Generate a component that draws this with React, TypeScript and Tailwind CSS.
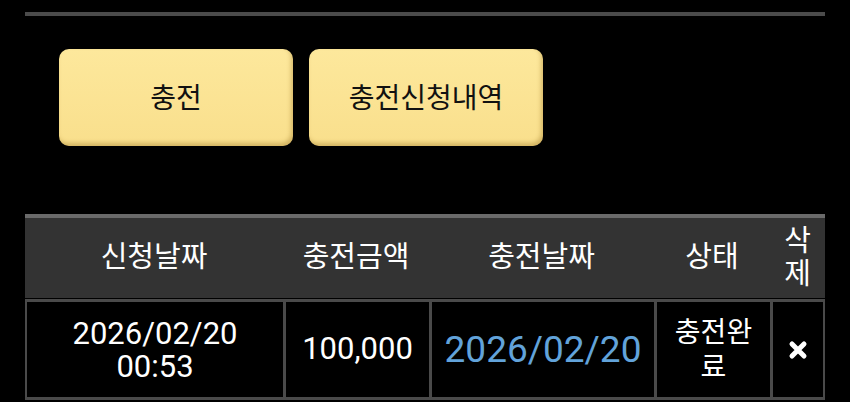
import type { ReactNode } from 'react';

type ChargeRequest = {
	requestedAt: string;
	requestedTime: string;
	amount: string;
	chargedAt: string;
	status: string;
};

const requests: ChargeRequest[] = [
	{
		requestedAt: '2026/02/20',
		requestedTime: '00:53',
		amount: '100,000',
		chargedAt: '2026/02/20',
		status: '충전완료',
	},
];

const cols = 'grid grid-cols-[258px_146px_225px_116px_55px]';

function ChargeButton({ children }: { children: ReactNode }) {
	return (
		<button className="w-[234px] h-[97px] rounded-[10px] bg-gradient-to-b from-[#fde89c] to-[#f9df8c] pt-[2px] text-[28px] text-[#111] shadow-[inset_-2px_-3px_4px_rgba(140,100,20,0.35)]">
			{children}
		</button>
	);
}

function DeleteIcon() {
	return (
		<svg width="20" height="20" viewBox="0 0 20 20">
			<path
				d="M4 4 L16 16 M16 4 L4 16"
				stroke="#fff"
				strokeWidth="5"
				strokeLinecap="round"
			/>
		</svg>
	);
}

function HeaderCell({ children, narrow }: { children: ReactNode; narrow?: boolean }) {
	return (
		<div
			className={
				narrow
					? 'flex items-center justify-center text-center px-[6px] leading-[33px]'
					: 'flex items-center justify-center text-center'
			}
		>
			{children}
		</div>
	);
}

function RequestRow({ item }: { item: ChargeRequest }) {
	return (
		<div className={`${cols} h-[101px] border-y-[3px] border-[#4a4a4a] text-white`}>
			<div className="flex flex-col items-center justify-center border-l-2 border-[#4a4a4a] text-[31px] leading-[33px]">
				<span>{item.requestedAt}</span>
				<span>{item.requestedTime}</span>
			</div>
			<div className="flex items-center justify-center border-l-[3px] border-[#4a4a4a] text-[31px]">
				{item.amount}
			</div>
			<div className="flex items-center justify-center border-l-[3px] border-[#4a4a4a] text-[37px] text-[#62a3da]">
				{item.chargedAt}
			</div>
			<div className="flex items-center justify-center border-l-[3px] border-[#4a4a4a] px-[6px] text-center text-[28px] leading-[35px]">
				{item.status}
			</div>
			<div className="flex items-center justify-center border-l-[3px] border-r-2 border-[#4a4a4a]">
				<DeleteIcon />
			</div>
		</div>
	);
}

export default function App() {
	return (
		<div className="w-[850px] h-[402px] overflow-hidden bg-black font-['Roboto','Noto_Sans_CJK_KR',sans-serif]">
			<div className="pt-[12px] px-[25px]">
				<div className="h-[4px] bg-[#4b4b4b]" />

				<div className="mt-[33px] ml-[34px] flex gap-[16px]">
					<ChargeButton>충전</ChargeButton>
					<ChargeButton>충전신청내역</ChargeButton>
				</div>

				<div className="mt-[68px]">
					<div className={`${cols} h-[84px] border-t-4 border-[#6a6a6a] bg-[#333333] text-[29px] text-white`}>
						<HeaderCell>신청날짜</HeaderCell>
						<HeaderCell>충전금액</HeaderCell>
						<HeaderCell>충전날짜</HeaderCell>
						<HeaderCell>상태</HeaderCell>
						<HeaderCell narrow>삭제</HeaderCell>
					</div>
					<div className="h-[1px]" />
					{requests.map((item, i) => (
						<RequestRow key={i} item={item} />
					))}
				</div>
			</div>
		</div>
	);
}
